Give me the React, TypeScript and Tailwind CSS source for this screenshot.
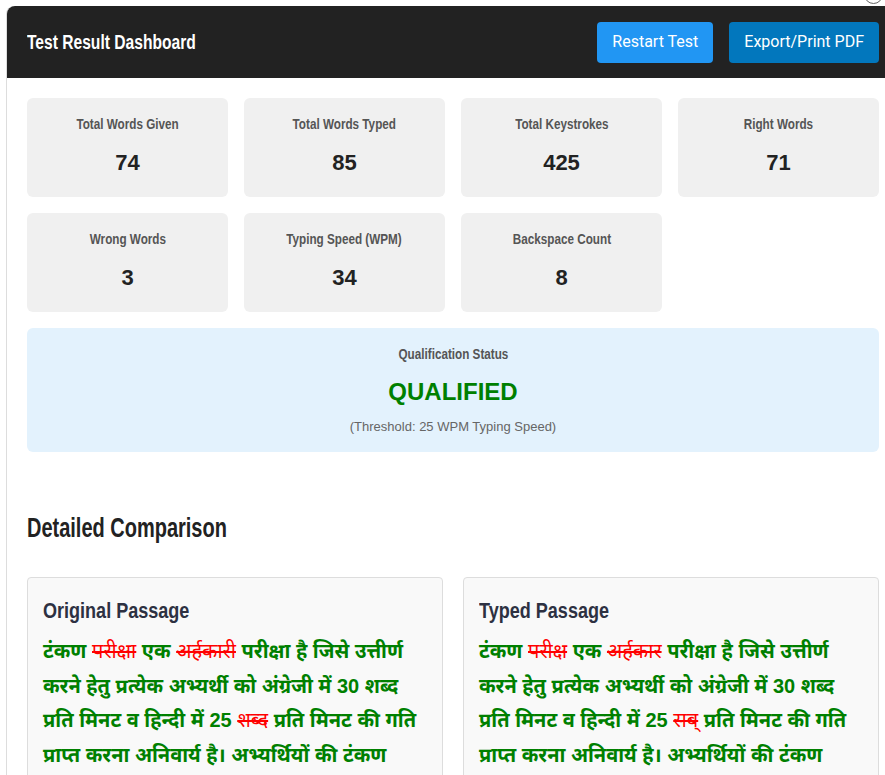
import React from 'react';

// narrow bold headline look (Oswald-like) from Liberation Sans squeezed horizontally
const HEAD = { fontFamily: '"Liberation Sans", Arial, sans-serif' };
const BODY = { fontFamily: '"Liberation Sans", Arial, "Noto Sans", sans-serif' };

type Stat = { label: string; value: number };

const stats: Stat[] = [
  { label: 'Total Words Given', value: 74 },
  { label: 'Total Words Typed', value: 85 },
  { label: 'Total Keystrokes', value: 425 },
  { label: 'Right Words', value: 71 },
  { label: 'Wrong Words', value: 3 },
  { label: 'Typing Speed (WPM)', value: 34 },
  { label: 'Backspace Count', value: 8 },
];

type Word = { text: string; wrong?: boolean };

const split = (s: string): Word[] => s.split(' ').map((text) => ({ text }));

const tail =
  'करने हेतु प्रत्येक अभ्यर्थी को अंग्रेजी में 30 शब्द प्रति मिनट व हिन्दी में 25';
const tail2 =
  'प्रति मिनट की गति प्राप्त करना अनिवार्य है। अभ्यर्थियों की टंकण क्षमता का मूल्यांकन इसी परीक्षा के आधार पर किया जाता है।';

const original: Word[] = [
  { text: 'टंकण' },
  { text: 'परीक्षा', wrong: true },
  { text: 'एक' },
  { text: 'अर्हकारी', wrong: true },
  ...split('परीक्षा है जिसे उत्तीर्ण'),
  ...split(tail),
  { text: 'शब्द', wrong: true },
  ...split(tail2),
];

const typed: Word[] = [
  { text: 'टंकण' },
  { text: 'परीक्ष', wrong: true },
  { text: 'एक' },
  { text: 'अर्हकार', wrong: true },
  ...split('परीक्षा है जिसे उत्तीर्ण'),
  ...split(tail),
  { text: 'सब्', wrong: true },
  ...split(tail2),
];

function Label({ children }: { children: React.ReactNode }) {
  return (
    <div
      className="origin-center scale-x-[0.78] whitespace-nowrap text-[15px] leading-[22px] font-bold text-[#555]"
      style={HEAD}
    >
      {children}
    </div>
  );
}

function StatCard({ label, value }: Stat) {
  return (
    <div className="flex flex-col items-center rounded-md bg-[#f0f0f0] pt-[15px] pb-5">
      <Label>{label}</Label>
      <div className="mt-[14px] text-[22px] leading-[28px] font-bold text-[#222]" style={BODY}>
        {value}
      </div>
    </div>
  );
}

function Passage({ title, words }: { title: string; words: Word[] }) {
  return (
    <div className="rounded border border-[#ddd] bg-[#f9f9f9] pt-[18px] pr-[10px] pb-[15px] pl-[15px]">
      <h3
        className="mb-[8px] origin-left scale-x-[0.82] whitespace-nowrap text-[22px] leading-[30px] font-bold text-[#2d3142]"
        style={HEAD}
      >
        {title}
      </h3>
      <p className="text-[20px] leading-[34.5px]" style={BODY}>
        {words.map((w, i) => (
          <React.Fragment key={i}>
            {w.wrong ? (
              <span className="font-normal text-[#ff0000] line-through">{w.text}</span>
            ) : (
              <span className="font-bold text-[#008000]">{w.text}</span>
            )}{' '}
          </React.Fragment>
        ))}
      </p>
    </div>
  );
}

export default function App() {
  return (
    <div className="relative overflow-hidden bg-white pt-[6px]">
      {/* close button peeking from above */}
      <div className="absolute -top-[15px] left-[864px] h-[19px] w-[19px] rounded-full border border-[#666]" />

      <div className="ml-[6px] w-[893px] rounded-tl-lg border-l border-[#ddd]">
        {/* Header */}
        <div className="flex h-[72px] items-center justify-between rounded-tl-lg bg-[#222] px-5">
          <h1
            className="origin-left scale-x-[0.78] whitespace-nowrap text-[20px] font-bold text-white"
            style={HEAD}
          >
            Test Result Dashboard
          </h1>
          <div className="flex gap-4" style={{ fontFamily: 'Roboto, "Liberation Sans", sans-serif' }}>
            <button className="h-[41px] rounded bg-[#2196f3] px-[15px] text-[16px] text-white">
              Restart Test
            </button>
            <button className="h-[41px] rounded bg-[#0277bd] px-[15px] text-[16px] text-white">
              Export/Print PDF
            </button>
          </div>
        </div>

        <div className="px-5 pt-5">
          {/* Stats */}
          <div className="grid grid-cols-4 gap-4">
            {stats.map((s) => (
              <StatCard key={s.label} {...s} />
            ))}
          </div>

          {/* Qualification */}
          <div className="mt-4 flex flex-col items-center rounded-md bg-[#e3f2fd] pt-[15px] pb-4">
            <Label>Qualification Status</Label>
            <div className="mt-3 text-[24px] leading-[30px] font-bold text-[#008000]" style={BODY}>
              QUALIFIED
            </div>
            <div className="mt-[11px] text-[13px] leading-[18px] text-[#666]" style={BODY}>
              (Threshold: 25 WPM Typing Speed)
            </div>
          </div>

          {/* Comparison */}
          <h2
            className="mt-[60px] origin-left scale-x-[0.74] whitespace-nowrap text-[27px] leading-[32px] font-bold text-[#222]"
            style={HEAD}
          >
            Detailed Comparison
          </h2>
          <div className="mt-[33px] grid grid-cols-2 gap-5 pb-8">
            <Passage title="Original Passage" words={original} />
            <Passage title="Typed Passage" words={typed} />
          </div>
        </div>
      </div>
    </div>
  );
}
